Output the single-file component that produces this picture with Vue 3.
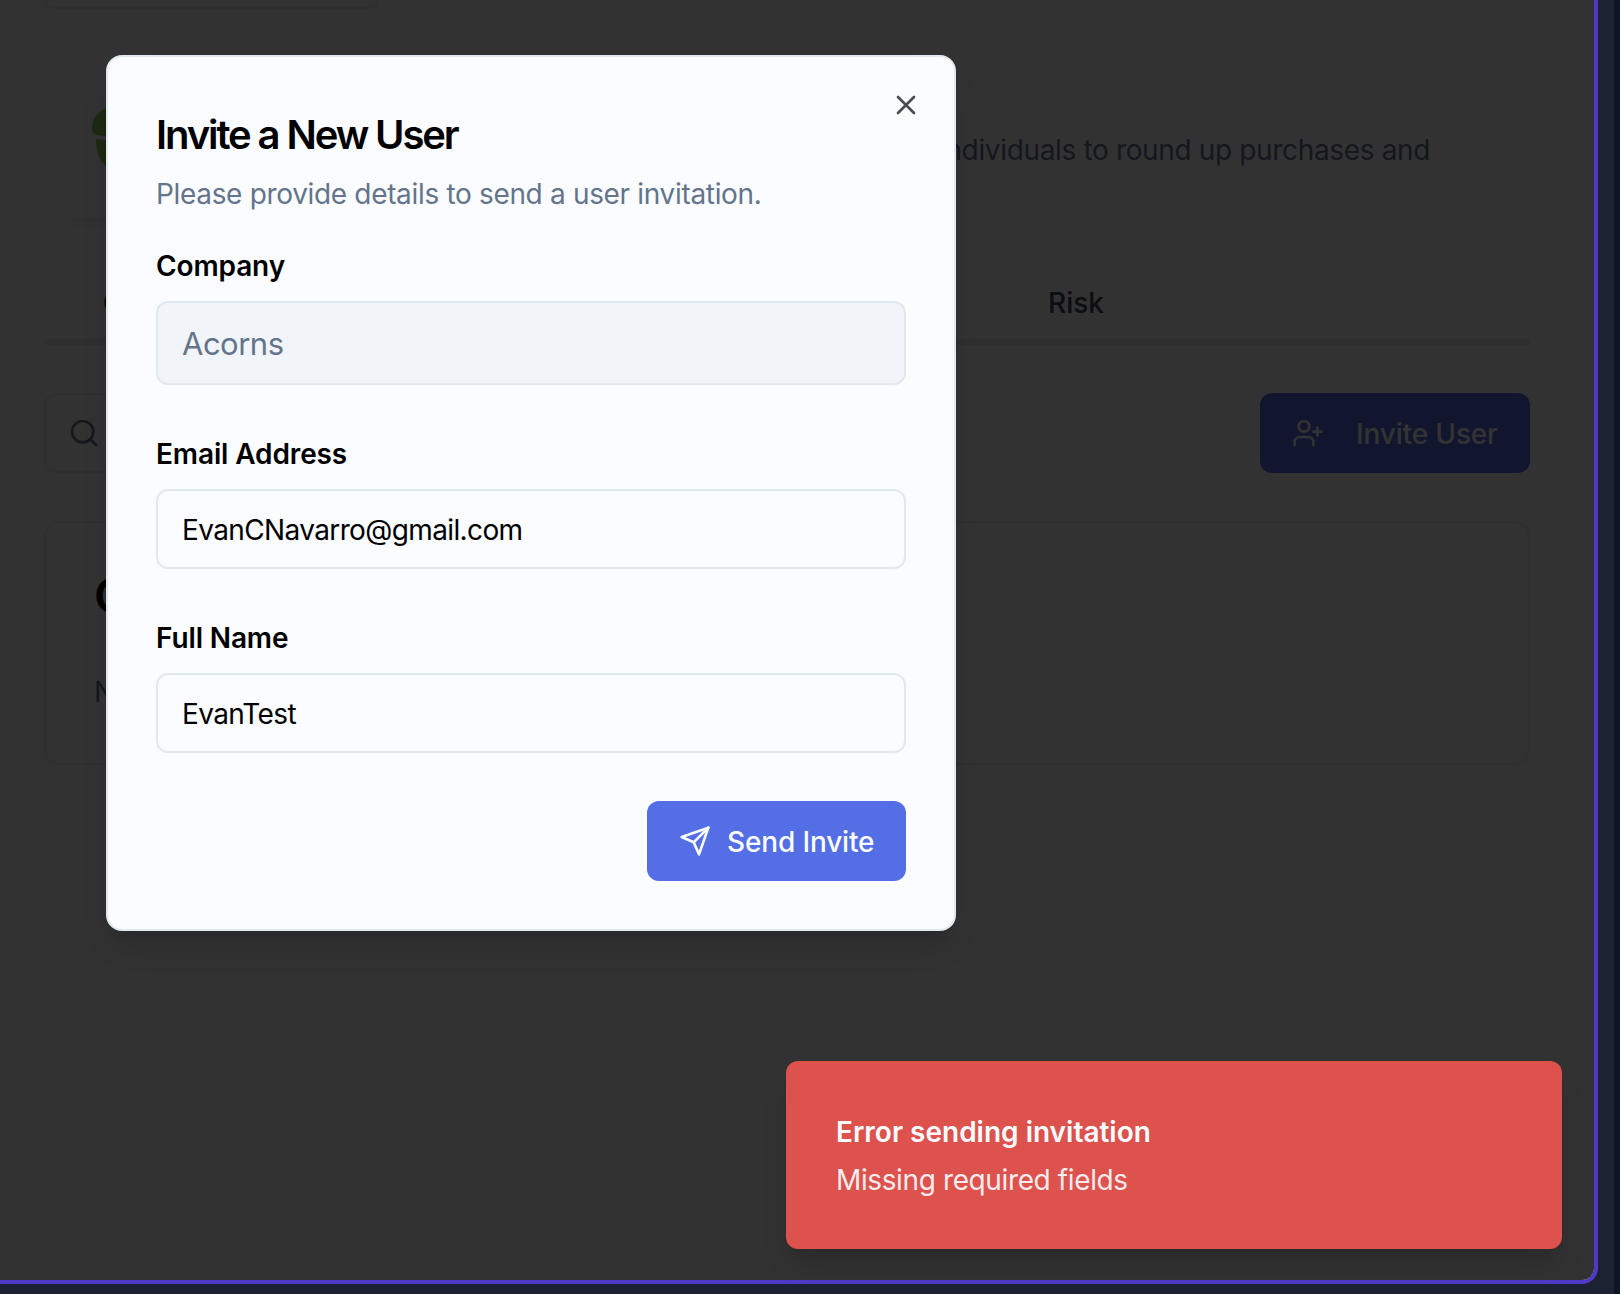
<script setup>
const fields = [
  { id: 'company', label: 'Company', value: 'Acorns', disabled: true },
  { id: 'email', label: 'Email Address', value: 'EvanCNavarro@gmail.com' },
  { id: 'name', label: 'Full Name', value: 'EvanTest' },
]
</script>

<template>
  <div class="screen">
    <div class="rail"></div>
    <main class="panel">
      <div class="top-card"></div>
      <header class="profile">
        <div class="logo-tile">
          <svg class="acorn" width="70" height="68" viewBox="0 0 70 68">
            <path d="M0 19C0 10 5 3 14-1 26-6 44-6 56-1c9 4 14 11 14 20 0 5-1 7-5 7Q35 31 5 26 0 25 0 19Z" />
            <path d="M4 30q31 5 62 0c0 13-4 22-10 28-6 5-13 8-21 12-8-4-15-7-21-12C8 52 4 43 4 30Z" />
          </svg>
        </div>
        <p class="about">Acorns is a fintech app that helps individuals to round up purchases and</p>
      </header>
      <nav class="tabs">
        <span class="tab overview">Overview</span>
        <span class="tab risk">Risk</span>
      </nav>
      <div class="toolbar">
        <div class="search">
          <svg class="icon" width="32" height="32" viewBox="0 0 24 24"><circle cx="11" cy="11" r="8" /><path d="m21 21-4.3-4.3" /></svg>
        </div>
        <button class="btn invite">
          <svg class="icon" width="32" height="32" viewBox="0 0 24 24"><path d="M16 21v-2a4 4 0 0 0-4-4H6a4 4 0 0 0-4 4v2" /><circle cx="9" cy="7" r="4" /><path d="M19 8v6M22 11h-6" /></svg>
          <span>Invite User</span>
        </button>
      </div>
      <section class="list-card">
        <h3>Company Users</h3>
        <p>No users found.</p>
      </section>
      <div class="overlay"></div>
    </main>

    <section class="dialog" role="dialog">
      <button class="close" aria-label="Close">
        <svg class="icon" width="32" height="32" viewBox="0 0 24 24"><path d="M18 6 6 18M6 6l12 12" /></svg>
      </button>
      <h2>Invite a New User</h2>
      <p class="sub">Please provide details to send a user invitation.</p>
      <div v-for="f in fields" :key="f.id" class="field" :class="{ disabled: f.disabled }">
        <label>{{ f.label }}</label>
        <div class="input"><span>{{ f.value }}</span></div>
      </div>
      <div class="actions">
        <button class="btn send">
          <svg class="icon" width="32" height="32" viewBox="0 0 24 24"><path d="m22 2-7 20-4-9-9-4Z" /><path d="M22 2 11 13" /></svg>
          <span>Send Invite</span>
        </button>
      </div>
    </section>

    <aside class="toast">
      <strong>Error sending invitation</strong>
      <p>Missing required fields</p>
    </aside>
  </div>
</template>

<style>
body { margin: 0; overflow: hidden; }
</style>

<style scoped>
* { box-sizing: border-box; }
.screen {
  position: relative;
  width: 1620px;
  height: 1294px;
  overflow: hidden;
  background: #1c2231;
  font-family: Inter, "Liberation Sans", sans-serif;
  font-size: 28px;
  line-height: 40px;
}
h2, h3, p { margin: 0; }
button { font: inherit; border: 0; margin: 0; }
.icon {
  display: block;
  flex: none;
  fill: none;
  stroke: currentColor;
  stroke-width: 2;
  stroke-linecap: round;
  stroke-linejoin: round;
}
.rail { position: absolute; top: 0; right: 0; width: 6px; height: 100%; background: #0f1524; }
.panel {
  position: relative;
  width: 1598px;
  height: 1284px;
  padding: 0 64px 0 44px;
  overflow: hidden;
  background: #fafbfd;
  border: solid #4f39c6;
  border-width: 0 4px 4px 0;
  border-radius: 0 0 16px 0;
}
.overlay { position: absolute; inset: 0; background: rgba(0, 0, 0, .8); }
.top-card {
  width: 334px;
  height: 9px;
  border: 2px solid #e6eaf0;
  border-top: 0;
  border-radius: 0 0 12px 12px;
}
.profile { display: flex; height: 160px; margin-top: 48px; }
.logo-tile {
  flex: none;
  width: 160px;
  height: 160px;
  padding: 52px 0 0 48px;
  border-radius: 24px;
  box-shadow: 0 16px 14px -12px rgba(0, 0, 0, .08), 0 0 30px rgba(0, 0, 0, .02);
}
.acorn { fill: #8cc858; overflow: visible; }
.about {
  flex: 1;
  padding: 73px 100px 0 0;
  color: #64748b;
  letter-spacing: -.35px;
  text-align: right;
  white-space: nowrap;
}
.tabs {
  display: flex;
  height: 86px;
  margin-top: 42px;
  padding: 24px 0 0 59px;
  border-bottom: 6px solid #e8ebf0;
  font-weight: 500;
  color: #3c4554;
}
.overview { width: 945px; color: #000; }
.toolbar { display: flex; justify-content: space-between; margin-top: 48px; }
.search {
  width: 620px;
  height: 80px;
  padding: 22px;
  border: 2px solid #e6eaf0;
  border-radius: 12px;
  color: #64748b;
}
.btn {
  display: flex;
  align-items: center;
  height: 80px;
  padding: 0 32px;
  border-radius: 12px;
  background: #546ee5;
  color: #fafcff;
  font-weight: 500;
  letter-spacing: -.15px;
  white-space: nowrap;
}
.btn span { padding-top: 1px; }
.invite { width: 270px; gap: 32px; }
.list-card {
  height: 244px;
  margin-top: 48px;
  padding: 47px 48px;
  border: 2px solid #e6eaf0;
  border-radius: 16px;
}
.list-card h3 { font-size: 48px; line-height: 52px; font-weight: 600; letter-spacing: -1.2px; }
.list-card p { margin-top: 50px; color: #64748b; }
.dialog {
  position: absolute;
  left: 106px;
  top: 55px;
  width: 850px;
  height: 876px;
  padding: 48px;
  background: #fafcff;
  border: 2px solid #e2e8f0;
  border-radius: 16px;
  box-shadow: 0 20px 30px -6px rgba(0, 0, 0, .12), 0 8px 12px -8px rgba(0, 0, 0, .12);
  color: #000;
}
.close { position: absolute; top: 32px; right: 32px; padding: 0; background: none; color: #4b4c4d; }
.dialog h2 { margin-top: 10px; font-size: 40px; line-height: 40px; font-weight: 600; letter-spacing: -2.1px; }
.sub { margin-top: 19px; color: #64748b; letter-spacing: -.33px; }
.field { margin-top: 55px; }
.sub + .field { margin-top: 38px; }
.field label { display: block; font-weight: 600; line-height: 28px; letter-spacing: -.12px; }
.input {
  display: flex;
  align-items: center;
  height: 80px;
  margin-top: 21px;
  padding: 2px 24px 0;
  border: 2px solid #e2e8f0;
  border-radius: 12px;
  letter-spacing: -.62px;
}
.disabled .input { height: 84px; background: #f1f5f9; color: #64748b; font-size: 31px; letter-spacing: -.5px; }
.actions { display: flex; justify-content: flex-end; margin-top: 48px; }
.send { width: 259px; gap: 16px; }
.toast {
  position: absolute;
  left: 786px;
  top: 1061px;
  width: 776px;
  height: 188px;
  padding: 51px 50px 49px;
  border-radius: 12px;
  background: #dd524c;
  color: #fafcff;
  box-shadow: 0 20px 30px -6px rgba(0, 0, 0, .14), 0 8px 12px -8px rgba(0, 0, 0, .12);
}
.toast strong { display: block; font-weight: 600; }
.toast p { margin-top: 8px; opacity: .9; letter-spacing: -.38px; }
</style>
